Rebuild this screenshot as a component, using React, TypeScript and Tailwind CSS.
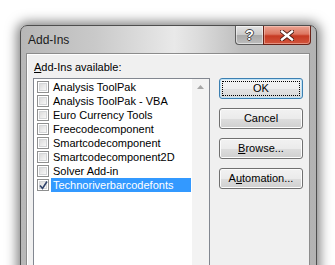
import type { ReactNode } from "react";

const addIns = [
  { name: "Analysis ToolPak", checked: false },
  { name: "Analysis ToolPak - VBA", checked: false },
  { name: "Euro Currency Tools", checked: false },
  { name: "Freecodecomponent", checked: false },
  { name: "Smartcodecomponent", checked: false },
  { name: "Smartcodecomponent2D", checked: false },
  { name: "Solver Add-in", checked: false },
  { name: "Technoriverbarcodefonts", checked: true },
];

const CheckBox = ({ checked }: { checked: boolean }) => (
  <div className="ml-[3px] flex h-[12px] w-[12px] shrink-0 items-center justify-center border border-[#8e8f8f] bg-white">
    <div className="flex h-[8px] w-[8px] items-center justify-center border border-[#d4d6d8] bg-[linear-gradient(135deg,#dcdcdc,#f7f7f7)]">
      {checked && (
        <svg width="9" height="9" viewBox="0 0 9 9" className="overflow-visible">
          <path d="M1 4.5 L3.5 7.5 L8 0.5" fill="none" stroke="#31446b" strokeWidth="1.6" />
        </svg>
      )}
    </div>
  </div>
);

const Button = ({ children, primary = false }: { children: ReactNode; primary?: boolean }) =>
  primary ? (
    <div className="relative flex h-[21px] w-[84px] items-center justify-center rounded-[3px] border border-[#3c7fb1] bg-[linear-gradient(#f4f4f4_0%,#eeeeee_50%,#e2e2e2_51%,#d9d9d9_100%)] shadow-[inset_0_0_0_1px_#bfe3f7] text-black">
      <div className="absolute inset-[2px] border border-dotted border-black" />
      {children}
    </div>
  ) : (
    <div className="flex h-[21px] w-[84px] items-center justify-center rounded-[3px] border border-[#707070] bg-[linear-gradient(#f2f2f2_0%,#ebebeb_50%,#dddddd_51%,#cfcfcf_100%)] shadow-[inset_0_0_0_1px_#fcfcfc] text-black">
      {children}
    </div>
  );

export default function App() {
  return (
    <div
      className="h-[265px] w-[335px] overflow-hidden bg-white pl-[20px] pt-[25px] text-[11px] text-black"
      style={{ fontFamily: '"Liberation Sans", Arial, sans-serif' }}
    >
      <div className="flex h-[260px] w-[297px] flex-col rounded-t-[7px] border border-[#4e4e4e] bg-[linear-gradient(90deg,#b7b7b7_0%,#c9c9c9_25%,#e9e9e9_52%,#dcdcdc_60%,#bdbdbd_75%,#b3b3b3_100%)] shadow-[0_0_12px_3px_rgba(0,0,0,0.5)]">
        {/* title bar */}
        <div className="flex h-[27px] shrink-0 items-start justify-between pl-[7px] pr-[5px]">
          <span className="pt-[7px] text-[12px] leading-[14px] text-[#1b1b1b]">Add-Ins</span>
          <div className="flex">
            <div className="flex h-[19px] w-[28px] items-center justify-center rounded-bl-[4px] border border-t-0 border-r-0 border-[#5c5c5c] bg-[linear-gradient(#e4e4e4_0%,#c9c9c9_50%,#a9a9a9_51%,#bdbdbd_100%)] shadow-[inset_0_0_0_1px_rgba(255,255,255,0.5)]">
              <span className="text-[14px] font-bold leading-none text-white [text-shadow:1px_0_0_#444,-1px_0_0_#444,0_1px_0_#444,0_-1px_0_#444]">
                ?
              </span>
            </div>
            <div className="flex h-[19px] w-[48px] items-center justify-center rounded-br-[4px] border border-t-0 border-[#6a2217] bg-[linear-gradient(#eba493_0%,#dd7660_45%,#c73a22_55%,#d2563e_100%)] shadow-[inset_0_0_0_1px_rgba(255,220,210,0.45)]">
              <svg width="14" height="11" viewBox="0 0 14 11">
                <path d="M2 1.5 L12 9.5 M12 1.5 L2 9.5" stroke="#4a1a12" strokeWidth="4.2" strokeLinecap="square" />
                <path d="M2 1.5 L12 9.5 M12 1.5 L2 9.5" stroke="#ffffff" strokeWidth="2.4" strokeLinecap="square" />
              </svg>
            </div>
          </div>
        </div>

        {/* client area */}
        <div className="ml-[5px] flex w-[284px] flex-1 flex-col border border-[#8c8c8c] bg-[#f0f0f0] px-[6px] pt-[6px] shadow-[inset_1px_1px_0_#ffffff]">
          <div className="pl-[1px] leading-[14px]">
            <span className="underline underline-offset-1">A</span>dd-Ins available:
          </div>
          <div className="mt-[4px] flex flex-1 gap-[9px]">
            <div className="flex w-[177px] border border-[#828790] bg-white">
              <div className="flex flex-1 flex-col pt-[1px]">
                {addIns.map((item) => (
                  <div key={item.name} className="flex h-[14px] items-center">
                    <CheckBox checked={item.checked} />
                    <div
                      className={
                        item.checked
                          ? "ml-[2px] mr-[1px] h-[14px] flex-1 whitespace-nowrap bg-[#3399ff] pl-[2px] leading-[14px] text-white"
                          : "ml-[2px] h-[14px] flex-1 whitespace-nowrap pl-[2px] leading-[14px]"
                      }
                    >
                      {item.name}
                    </div>
                  </div>
                ))}
              </div>
              <div className="flex w-[17px] shrink-0 justify-center bg-[#f3f3f3] pt-[6px]">
                <svg width="7" height="4" viewBox="0 0 7 4">
                  <path d="M0 4 L3.5 0 L7 4 Z" fill="#a7a7a7" />
                </svg>
              </div>
            </div>
            <div className="flex flex-col gap-[9px]">
              <Button primary>OK</Button>
              <Button>Cancel</Button>
              <Button>
                <span>
                  <span className="underline underline-offset-1">B</span>rowse...
                </span>
              </Button>
              <Button>
                <span>
                  A<span className="underline underline-offset-1">u</span>tomation...
                </span>
              </Button>
            </div>
          </div>
        </div>
      </div>
    </div>
  );
}
